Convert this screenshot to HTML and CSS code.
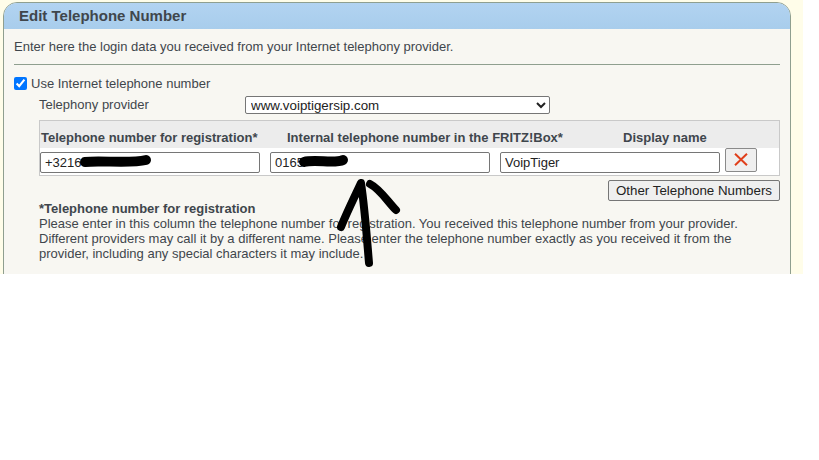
FILE: index.html
```html
<!DOCTYPE html>
<html lang="en">
<head>
    <meta charset="UTF-8">
    <title>Edit Telephone Number</title>
    <link rel="stylesheet" href="styles.css">
</head>
<body>
    <div class="page">
        <div class="box">
            <div class="box-title">Edit Telephone Number</div>
            <div class="box-body">
                <p class="intro">Enter here the login data you received from your Internet telephony provider.</p>
                <hr class="rule">

                <label class="use-row">
                    <input type="checkbox" class="use-check" checked>
                    Use Internet telephone number
                </label>

                <div class="provider-row">
                    <span class="provider-label">Telephony provider</span>
                    <select class="provider-select">
                        <option>www.voiptigersip.com</option>
                    </select>
                </div>

                <div class="numbers">
                    <div class="numbers-head">
                        <span class="col-reg">Telephone number for registration*</span>
                        <span class="col-int">Internal telephone number in the FRITZ!Box*</span>
                        <span class="col-name">Display name</span>
                    </div>
                    <div class="numbers-row">
                        <input type="text" class="num-input" value="+3216">
                        <input type="text" class="num-input" value="0165">
                        <input type="text" class="num-input" value="VoipTiger">
                        <button class="del-btn" aria-label="Delete">
                            <svg width="14" height="13" viewBox="0 0 14 13">
                                <path d="M1 .8 13 12.2M13 .8 1 12.2" stroke="#e0401c" stroke-width="2" fill="none"/>
                            </svg>
                        </button>
                    </div>
                </div>

                <div class="other-row">
                    <button class="other-btn">Other Telephone Numbers</button>
                </div>

                <div class="note">
                    <b>*Telephone number for registration</b><br>
                    Please enter in this column the telephone number for registration. You received this telephone number from your provider.
                    Different providers may call it by a different name. Please enter the telephone number exactly as you received it from the
                    provider, including any special characters it may include.
                </div>
            </div>
        </div>
    </div>

    <!-- marker drawn over the screenshot -->
    <svg class="marker" width="819" height="280" viewBox="0 0 819 280">
        <path d="M85 162 C100 160 130 164 146 160" stroke-width="10"/>
        <path d="M304 162 C315 159 335 164 343 160" stroke-width="10"/>
        <path d="M369 263 C367 240 365 210 361 183 C355 196 347 212 341 227" stroke-width="8"/>
        <path d="M370 184 C380 189 388 202 396 210" stroke-width="8"/>
    </svg>
</body>
</html>
```

FILE: styles.css
```css
body {
    margin: 0;
    background-color: #fff;
    font-family: Arial, "Liberation Sans", sans-serif;
    font-size: 13px;
    color: #3f464c;
}

.page {
    width: 803px;
    height: 274px;
    overflow: hidden;
    padding: 2px 0 0 3px;
    box-sizing: border-box;
    background-color: #fffde9;
}

.box {
    width: 788px;
    height: 290px;
    box-sizing: border-box;
    border: 1px solid #8f9f8f;
    border-radius: 14px 14px 0 0;
    background-color: #f8f7f2;
    overflow: hidden;
}

.box-title {
    height: 26px;
    padding-left: 15px;
    line-height: 26px;
    font-size: 15px;
    font-weight: bold;
    color: #40464c;
    background: linear-gradient(#b2d3f1, #a8cdec);
}

.box-body {
    padding: 0 10px;
}

.intro {
    margin: 0;
    padding-top: 10px;
    line-height: 15px;
}

.rule {
    margin: 10px 0 0;
    border: 0;
    border-top: 1px solid #8f9f8f;
}

.use-row {
    display: flex;
    align-items: center;
    margin-top: 10px;
    height: 16px;
}

.use-check {
    width: 13px;
    height: 13px;
    margin: 0 4px 0 0;
}

.provider-row {
    display: flex;
    align-items: center;
    margin: 4px 0 0 25px;
    height: 18px;
}

.provider-label {
    width: 206px;
}

.provider-select {
    width: 305px;
    height: 18px;
    margin-top: 2px;
    padding: 0 0 0 1px;
    border: 1px solid #767676;
    border-radius: 2px;
    background-color: #fff;
    font-family: inherit;
    font-size: 13.33px;
    color: #222;
}

.numbers {
    margin: 7px 0 0 25px;
    border: 1px solid #c9c9c9;
    background-color: #fff;
}

.numbers-head {
    display: flex;
    align-items: flex-end;
    height: 27px;
    background-color: #ececec;
    font-weight: bold;
    line-height: 15px;
}

.numbers-head span {
    margin-bottom: 3px;
}

.col-reg {
    width: 246px;
    padding-left: 1px;
}

.col-int {
    width: 336px;
}

.numbers-row {
    display: flex;
    align-items: flex-start;
    height: 27px;
}

.num-input {
    width: 220px;
    height: 21px;
    box-sizing: border-box;
    margin: 4px 10px 0 0;
    padding: 0 4px;
    border: 1px solid #767676;
    border-radius: 2px;
    font-family: inherit;
    font-size: 13px;
    color: #222;
}

.num-input:nth-child(3) {
    margin-right: 5px;
}

.del-btn {
    display: flex;
    align-items: center;
    justify-content: center;
    width: 32px;
    height: 24px;
    padding: 0 0 2px;
    border: 1px solid #8a8a8a;
    border-radius: 2px;
    background-color: #efefef;
}

.other-row {
    display: flex;
    justify-content: flex-end;
    margin-top: 4px;
}

.other-btn {
    width: 172px;
    height: 21px;
    padding: 0;
    border: 1px solid #767676;
    border-radius: 2px;
    background-color: #efefef;
    font-family: inherit;
    font-size: 13.33px;
    color: #222;
}

.note {
    width: 720px;
    margin: 0 0 0 25px;
    line-height: 15px;
}

.marker {
    position: absolute;
    top: 0;
    left: 0;
    fill: none;
    stroke: #000;
    stroke-linecap: round;
    stroke-linejoin: round;
}
```
